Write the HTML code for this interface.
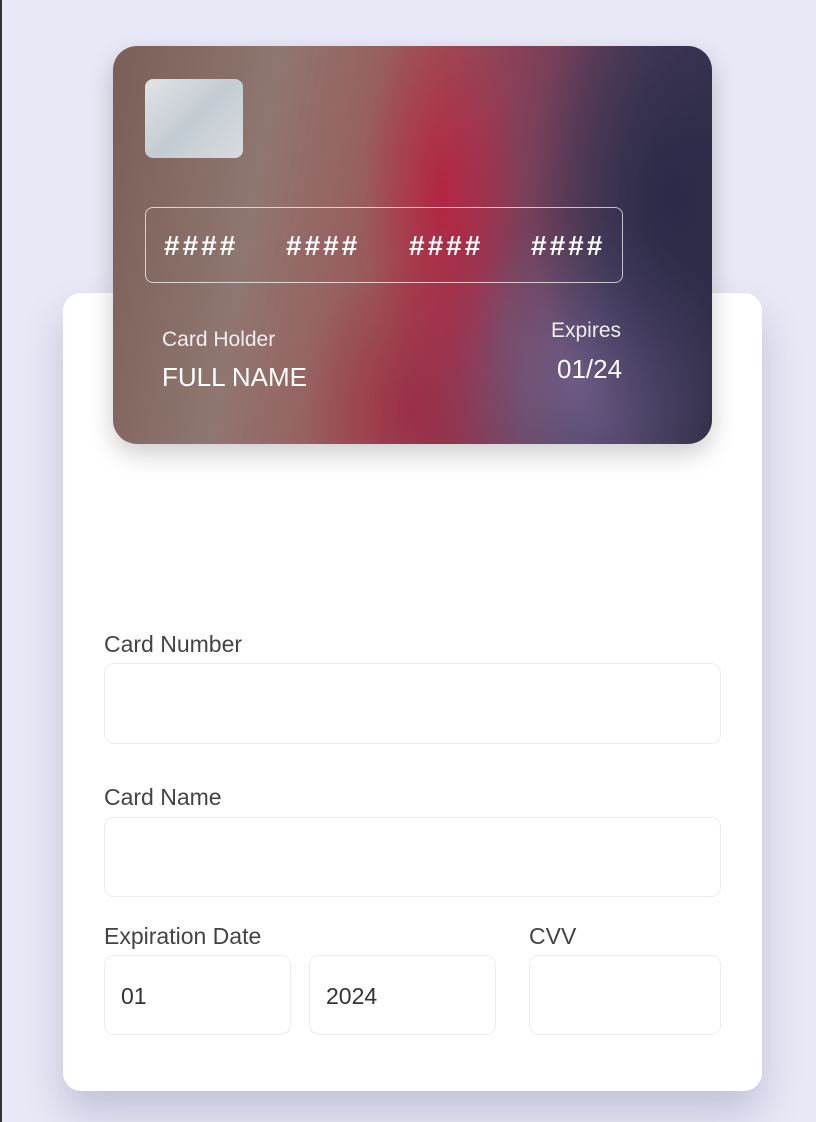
<!DOCTYPE html>
<html><head><style>
body{margin:0;width:816px;height:1122px;background:#e8e8f6;position:relative;overflow:hidden;font-family:"Liberation Sans",sans-serif;}
.edge{position:absolute;left:0;top:0;width:2px;height:1122px;background:#333;}
.panel{position:absolute;left:63px;top:293px;width:699px;height:798px;background:#fff;border-radius:18px;box-shadow:0 22px 40px rgba(60,60,110,0.22);}
.card{position:absolute;left:113px;top:46px;width:599px;height:398px;border-radius:24px;overflow:hidden;
background:
radial-gradient(ellipse 80px 200px at 330px 150px,rgba(190,25,60,0.75),transparent),
radial-gradient(ellipse 110px 150px at 300px 360px,rgba(160,30,60,0.6),transparent),
radial-gradient(ellipse 140px 260px at 560px 150px,rgba(40,40,70,0.9),transparent),
radial-gradient(ellipse 160px 160px at 470px 330px,rgba(130,110,160,0.6),transparent),
linear-gradient(100deg,#7a5e58 0%,#907670 25%,#9c5458 48%,#8b4058 60%,#4b3f5e 80%,#2e2c45 100%);
box-shadow:0 10px 25px rgba(0,0,0,0.2);}
.chip{position:absolute;left:32px;top:33px;width:98px;height:79px;border-radius:8px;background:linear-gradient(135deg,#e9eef2,#c8d4dc 50%,#dfe4ea);opacity:.92;}
.num{position:absolute;left:32px;top:161px;width:478px;height:76px;border:1.5px solid rgba(255,255,255,0.7);border-radius:8px;box-sizing:border-box;color:#fff;font-size:28px;font-weight:bold;letter-spacing:3px;}
.num span{position:absolute;top:22px}
.t{position:absolute;color:#fff}
.lbl{position:absolute;font-size:23px;color:#444;}
.inp{position:absolute;border:1.5px solid #ececf4;border-radius:10px;box-sizing:border-box;font-size:23px;color:#333;}
.inp span{position:absolute;left:16px;top:27px}
</style></head><body>
<div class="edge"></div>
<div class="panel"></div>
<div class="card">
<div class="chip"></div>
<div class="num"><span style="left:18px">####</span><span style="left:140px">####</span><span style="left:263px">####</span><span style="left:385px">####</span></div>
<div class="t" style="left:49px;top:282px;font-size:21px;color:#eee">Card Holder</div>
<div class="t" style="left:49px;top:316px;font-size:26px">FULL NAME</div>
<div class="t" style="left:438px;top:273px;font-size:21px;color:#eee">Expires</div>
<div class="t" style="left:444px;top:308px;font-size:26px">01/24</div>
</div>
<div class="lbl" style="left:104px;top:631px">Card Number</div>
<div class="inp" style="left:104px;top:663px;width:617px;height:81px"></div>
<div class="lbl" style="left:104px;top:784px">Card Name</div>
<div class="inp" style="left:104px;top:817px;width:617px;height:80px"></div>
<div class="lbl" style="left:104px;top:923px">Expiration Date</div>
<div class="lbl" style="left:529px;top:923px">CVV</div>
<div class="inp" style="left:104px;top:955px;width:187px;height:80px"><span>01</span></div>
<div class="inp" style="left:309px;top:955px;width:187px;height:80px"><span>2024</span></div>
<div class="inp" style="left:529px;top:955px;width:192px;height:80px"></div>
</body></html>
